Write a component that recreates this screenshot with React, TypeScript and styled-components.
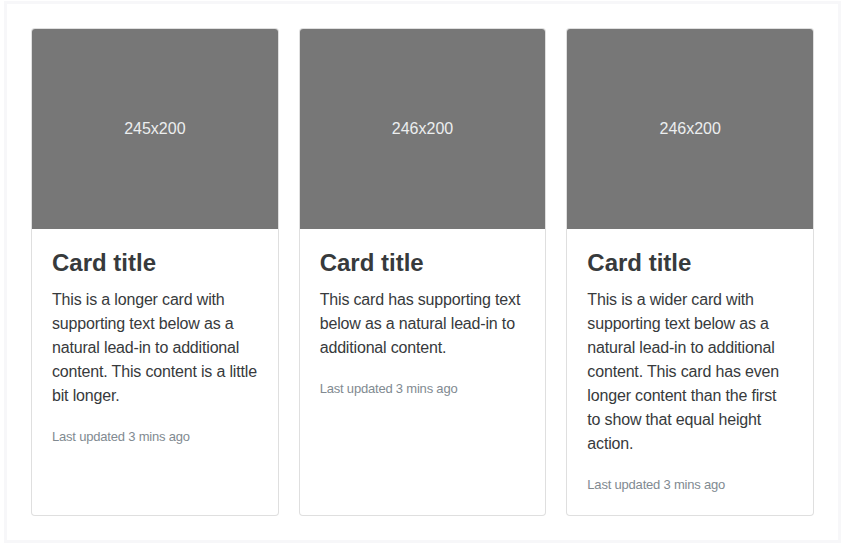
import React from 'react';
import styled, {createGlobalStyle} from "styled-components";

const GlobalStyle = createGlobalStyle`
    body {
        margin: 0;
        background: #fff;
        font-family: "Liberation Sans", Arial, sans-serif;
        color: #373a3c;
    }
`
const Example = styled.div`
    box-sizing: border-box;
    width: 837px;
    margin: 1px 2px 1px 4px;
    padding: 24px;
    border: 3px solid #f7f7f9;
`
const CardDeck = styled.div`
    display: flex;
    align-items: stretch;
    gap: 20px;
`
const Card = styled.div`
    flex: 1 1 0;
    display: flex;
    flex-direction: column;
    border: 1px solid rgba(0, 0, 0, .125);
    border-radius: 4px;
    background: #fff;
    min-width: 0;
`
const Placeholder = styled.div`
    height: 200px;
    display: flex;
    align-items: center;
    justify-content: center;
    background: #777;
    color: #eceeef;
    font-size: 16px;
    border-radius: 3px 3px 0 0;
`
const CardBlock = styled.div`
    padding: 21px 20px 18px;
`
const CardTitle = styled.h4`
    margin: 0 0 12px;
    font-size: 24px;
    font-weight: 700;
    line-height: 1.1;
    color: #373a3c;
`
const CardText = styled.p`
    margin: 0 0 16px;
    font-size: 16px;
    line-height: 24px;
    letter-spacing: -0.17px;

    &:last-child {
        margin-bottom: 0;
    }
`
const Muted = styled.small`
    font-size: 13px;
    letter-spacing: -0.2px;
    color: #818a91;
`

const cards = [
    {
        size: "245x200",
        text: "This is a longer card with supporting text below as a natural lead-in to additional content. This content is a little bit longer."
    },
    {
        size: "246x200",
        text: "This card has supporting text below as a natural lead-in to additional content."
    },
    {
        size: "246x200",
        text: "This is a wider card with supporting text below as a natural lead-in to additional content. This card has even longer content than the first to show that equal height action."
    },
]

export default function App() {
    return (
        <>
            <GlobalStyle/>
            <Example>
                <CardDeck>
                    {cards.map((card, index) => (
                        <Card key={index}>
                            <Placeholder>{card.size}</Placeholder>
                            <CardBlock>
                                <CardTitle>Card title</CardTitle>
                                <CardText>{card.text}</CardText>
                                <CardText><Muted>Last updated 3 mins ago</Muted></CardText>
                            </CardBlock>
                        </Card>
                    ))}
                </CardDeck>
            </Example>
        </>
    );
}
